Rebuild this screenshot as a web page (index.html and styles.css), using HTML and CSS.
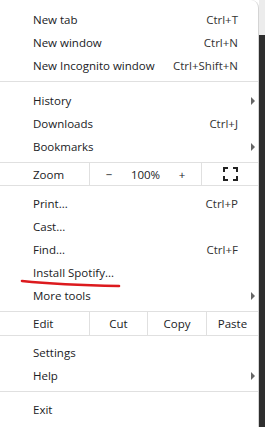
FILE: index.html
```html
<!DOCTYPE html>
<html lang="en">
<head>
<meta charset="UTF-8">
<title>Menu</title>
<link rel="stylesheet" href="styles.css">
</head>
<body>
  <!-- browser main menu -->
  <main class="menu">
    <div class="item"><span>New tab</span><span class="key">Ctrl+T</span><span></span></div>
    <div class="item"><span>New window</span><span class="key">Ctrl+N</span><span></span></div>
    <div class="item"><span>New Incognito window</span><span class="key">Ctrl+Shift+N</span><span></span></div>
    <hr class="sep first">
    <div class="item"><span>History</span><span class="key"></span><span class="arrow"></span></div>
    <div class="item"><span>Downloads</span><span class="key">Ctrl+J</span><span></span></div>
    <div class="item"><span>Bookmarks</span><span class="key"></span><span class="arrow"></span></div>

    <!-- zoom controls -->
    <div class="zoom">
      <span class="label">Zoom</span>
      <div class="zoom-ctrl">
        <span>&minus;</span>
        <span>100%</span>
        <span>+</span>
      </div>
      <div class="full">
        <svg width="15" height="14" viewBox="0 0 15 14">
          <path d="M1 5V1h4M10 1h4v4M14 9v4h-4M5 13H1V9" fill="none" stroke="#222" stroke-width="2"/>
        </svg>
      </div>
    </div>

    <div class="item"><span>Print...</span><span class="key">Ctrl+P</span><span></span></div>
    <div class="item"><span>Cast...</span><span class="key"></span><span></span></div>
    <div class="item"><span>Find...</span><span class="key">Ctrl+F</span><span></span></div>
    <div class="item marked"><span>Install Spotify...</span><span class="key"></span><span></span>
      <svg class="scribble" width="110" height="12" viewBox="0 0 110 12">
        <path d="M2 3 Q 40 7 99 8" fill="none" stroke="#dc1a1e" stroke-width="2.6" stroke-linecap="round"/>
      </svg>
    </div>
    <div class="item"><span>More tools</span><span class="key"></span><span class="arrow"></span></div>

    <!-- edit controls -->
    <div class="edit">
      <span class="label">Edit</span>
      <span class="cell">Cut</span>
      <span class="cell">Copy</span>
      <span class="cell">Paste</span>
    </div>

    <div class="item"><span>Settings</span><span class="key"></span><span></span></div>
    <div class="item"><span>Help</span><span class="key"></span><span class="arrow"></span></div>
    <hr class="sep">
    <div class="item"><span>Exit</span><span class="key"></span><span></span></div>
  </main>
  <!-- window behind the menu -->
  <aside class="edge">
    <div class="edge-top"></div>
    <div class="edge-bottom"></div>
  </aside>
</body>
</html>
```

FILE: styles.css
```css
/* page */
html, body
{
  margin: 0;
  height: 100%;
}
body
{
  display: flex;
  font-family: "Open Sans", "Noto Sans", sans-serif;
  font-size: 11.5px;
  color: #202124;
  background: #fff;
}
/* the menu panel */
.menu
{
  width: 259px;
  box-sizing: border-box;
  padding-top: 8px;
  border-right: 1px solid #d4d4d4;
  border-top-right-radius: 8px;
  background: #fff;
}
/* ordinary menu line */
.item
{
  position: relative;
  display: grid;
  grid-template-columns: 1fr auto 17px;
  align-items: center;
  height: 23px;
  padding-left: 33px;
  padding-right: 3px;
}
.key
{
  color: #333;
}
/* submenu arrow */
.arrow
{
  justify-self: end;
  width: 0;
  height: 0;
  border-top: 4px solid transparent;
  border-bottom: 4px solid transparent;
  border-left: 4px solid #666;
}
/* separators */
.sep
{
  border: 0;
  height: 1px;
  background: #e0e0e0;
  margin: 4px 0 6px;
}
.sep.first
{
  margin-bottom: 7px;
}
/* zoom line */
.zoom
{
  display: grid;
  grid-template-columns: 89px 112px 1fr;
  height: 22px;
  margin: 4px 0 6px;
  border-top: 1px solid #e0e0e0;
  border-bottom: 1px solid #e0e0e0;
}
.label
{
  padding-left: 33px;
  display: flex;
  align-items: center;
}
.zoom-ctrl
{
  display: grid;
  grid-template-columns: 38px 1fr 38px;
  align-items: center;
  justify-items: center;
  border-left: 1px solid #e0e0e0;
}
.full
{
  display: flex;
  align-items: center;
  justify-content: center;
  border-left: 1px solid #e0e0e0;
}
/* edit line */
.edit
{
  display: grid;
  grid-template-columns: 89px 58px 59px 1fr;
  height: 23px;
  margin: 4px 0 5px;
  border-top: 1px solid #e0e0e0;
  border-bottom: 1px solid #e0e0e0;
}
.cell
{
  display: flex;
  align-items: center;
  justify-content: center;
  border-left: 1px solid #e0e0e0;
}
/* red pen mark under the spotify item */
.scribble
{
  position: absolute;
  left: 20px;
  top: 17px;
}
/* strip of window on the right */
.edge
{
  flex: 1;
  display: flex;
  flex-direction: column;
}
.edge-top
{
  height: 35px;
  background: #ececec;
}
.edge-bottom
{
  flex: 1;
  background: #2e2e2e;
}
```
